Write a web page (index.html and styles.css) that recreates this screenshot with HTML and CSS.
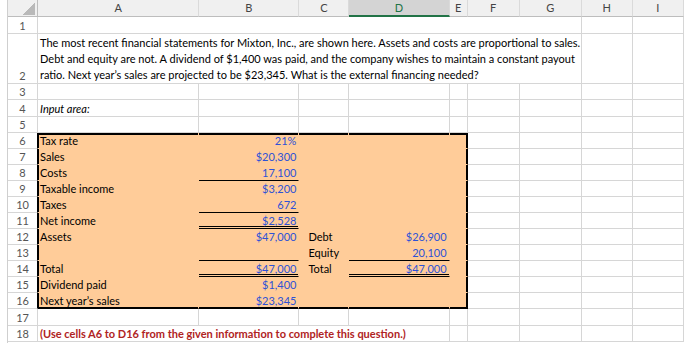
FILE: index.html
```html
<!DOCTYPE html>
<html lang="en">
<head>
  <meta charset="UTF-8">
  <title>External financing needed</title>
  <link rel="stylesheet" href="styles.css">
</head>
<body>
  <div class="sheet">
    <table class="grid">
      <colgroup>
        <col class="c-rh">
        <col class="c-a">
        <col class="c-b">
        <col class="c-c">
        <col class="c-d">
        <col class="c-e">
        <col class="c-f">
        <col class="c-g">
        <col class="c-h">
        <col class="c-i">
      </colgroup>
      <thead>
        <tr class="hdr">
          <th class="corner"></th>
          <th>A</th>
          <th>B</th>
          <th>C</th>
          <th class="sel">D</th>
          <th>E</th>
          <th>F</th>
          <th>G</th>
          <th>H</th>
          <th>I</th>
        </tr>
      </thead>
      <tbody>
        <tr class="r17">
          <th>1</th>
          <td colspan="7"></td><td></td><td></td>
        </tr>
        <tr class="tall">
          <th>2</th>
          <td colspan="7" class="intro">The most recent financial statements for Mixton, Inc., are shown here. Assets and costs are proportional to sales.<br>Debt and equity are not. A dividend of $1,400 was paid, and the company wishes to maintain a constant payout<br>ratio. Next year’s sales are projected to be $23,345. What is the external financing needed?</td>
          <td></td><td></td>
        </tr>
        <tr>
          <th>3</th>
          <td></td><td></td><td></td><td></td><td></td><td></td><td></td><td></td><td></td>
        </tr>
        <tr class="r17">
          <th>4</th>
          <td class="note">Input area:</td><td></td><td></td><td></td><td></td><td></td><td></td><td></td><td></td>
        </tr>
        <tr>
          <th>5</th>
          <td></td><td></td><td></td><td></td><td></td><td></td><td></td><td></td><td></td>
        </tr>
        <tr>
          <th class="edge">6</th>
          <td class="in tl">Tax rate</td>
          <td class="in t num">21%</td>
          <td class="in t"></td>
          <td class="in t"></td>
          <td class="in tr"></td>
          <td></td><td></td><td></td><td></td>
        </tr>
        <tr>
          <th class="edge">7</th>
          <td class="in l">Sales</td>
          <td class="in num">$20,300</td>
          <td class="in"></td>
          <td class="in"></td>
          <td class="in r"></td>
          <td></td><td></td><td></td><td></td>
        </tr>
        <tr>
          <th class="edge">8</th>
          <td class="in l">Costs</td>
          <td class="in num single">17,100</td>
          <td class="in"></td>
          <td class="in"></td>
          <td class="in r"></td>
          <td></td><td></td><td></td><td></td>
        </tr>
        <tr>
          <th class="edge">9</th>
          <td class="in l">Taxable income</td>
          <td class="in num">$3,200</td>
          <td class="in"></td>
          <td class="in"></td>
          <td class="in r"></td>
          <td></td><td></td><td></td><td></td>
        </tr>
        <tr>
          <th class="edge">10</th>
          <td class="in l">Taxes</td>
          <td class="in num single">672</td>
          <td class="in"></td>
          <td class="in"></td>
          <td class="in r"></td>
          <td></td><td></td><td></td><td></td>
        </tr>
        <tr>
          <th class="edge">11</th>
          <td class="in l">Net income</td>
          <td class="in num double">$2,528</td>
          <td class="in"></td>
          <td class="in"></td>
          <td class="in r"></td>
          <td></td><td></td><td></td><td></td>
        </tr>
        <tr>
          <th class="edge">12</th>
          <td class="in l">Assets</td>
          <td class="in num">$47,000</td>
          <td class="in indent">Debt</td>
          <td class="in num">$26,900</td>
          <td class="in r"></td>
          <td></td><td></td><td></td><td></td>
        </tr>
        <tr>
          <th class="edge">13</th>
          <td class="in l"></td>
          <td class="in num single"></td>
          <td class="in indent">Equity</td>
          <td class="in num single">20,100</td>
          <td class="in r"></td>
          <td></td><td></td><td></td><td></td>
        </tr>
        <tr>
          <th class="edge">14</th>
          <td class="in l">Total</td>
          <td class="in num double">$47,000</td>
          <td class="in indent">Total</td>
          <td class="in num double">$47,000</td>
          <td class="in r"></td>
          <td></td><td></td><td></td><td></td>
        </tr>
        <tr>
          <th class="edge">15</th>
          <td class="in l">Dividend paid</td>
          <td class="in num">$1,400</td>
          <td class="in"></td>
          <td class="in"></td>
          <td class="in r"></td>
          <td></td><td></td><td></td><td></td>
        </tr>
        <tr>
          <th class="edge">16</th>
          <td class="in bl">Next year’s sales</td>
          <td class="in b num">$23,345</td>
          <td class="in b"></td>
          <td class="in b"></td>
          <td class="in br"></td>
          <td></td><td></td><td></td><td></td>
        </tr>
        <tr class="r17">
          <th>17</th>
          <td></td><td></td><td></td><td></td><td></td><td></td><td></td><td></td><td></td>
        </tr>
        <tr>
          <th>18</th>
          <td colspan="4" class="hint">(Use cells A6 to D16 from the given information to complete this question.)</td>
          <td></td><td></td><td></td><td></td><td></td>
        </tr>
      </tbody>
    </table>
  </div>
</body>
</html>
```

FILE: styles.css
```css
body {
  margin: 0;
  background-color: #fff;
  font-family: Lato, "Liberation Sans", sans-serif;
  font-size: 11px;
  color: #000;
}

.sheet {
  margin-left: 7px;
  border-left: 1px solid #cfcfcf;
  height: 343px;
  overflow: hidden;
}

.grid {
  table-layout: fixed;
  border-collapse: separate;
  border-spacing: 0;
  width: 676px;
}

.c-rh { width: 30px; }
.c-a { width: 161px; }
.c-b { width: 100px; }
.c-c { width: 50px; }
.c-d { width: 100px; }
.c-e { width: 18px; }
.c-f { width: 52px; }
.c-g { width: 62px; }
.c-h { width: 51px; }
.c-i { width: 51px; }

.grid th,
.grid td {
  height: 16px;
  padding: 1px 2px 0;
  line-height: 14px;
  white-space: nowrap;
  vertical-align: bottom;
  border-right: 1px solid #d6d6d6;
  border-bottom: 1px solid #d6d6d6;
  box-sizing: border-box;
}

/* column letters */
.hdr th {
  height: 17px;
  padding-top: 0;
  line-height: 16px;
  font-weight: normal;
  color: #444;
  background-color: #f0f0f0;
  border-right-color: #dadada;
  border-bottom-color: #bdbdbd;
  text-align: center;
}

.hdr th.sel {
  line-height: 15px;
  color: #217346;
  background-color: #d4d4d4;
  border-bottom: 2px solid #217346;
}

.hdr th.corner {
  background-color: #f0f0f0;
  background-image: linear-gradient(to bottom right, transparent 50%, #b9b9b9 50%);
  background-size: 12px 12px;
  background-position: right 2px bottom 1px;
  background-repeat: no-repeat;
  border-right-color: #bdbdbd;
}

/* row numbers */
tbody th {
  font-weight: normal;
  color: #555;
  text-align: center;
  background-color: #fff;
  border-right-color: #bdbdbd;
  padding-left: 1px;
  padding-right: 0;
}

tbody th.edge {
  border-right-color: #000;
}

.tall th,
.tall td {
  height: 50px;
}

.r17 th,
.r17 td {
  height: 17px;
  line-height: 15px;
}

/* the wrapped question keeps Excel's line breaks */
.grid td.intro {
  padding-top: 0;
  line-height: 16px;
}

.note {
  font-style: italic;
}

.hint {
  color: #b02323;
  font-weight: bold;
}

/* input area */
.in {
  background-color: #ffcc99;
}

.grid td.in {
  border-right-color: transparent;
  border-bottom-color: transparent;
}

.num {
  text-align: right;
  color: #2e52d6;
}

.grid td.indent {
  padding-left: 9px;
}

/* accounting underlines, drawn without changing the row height */
.grid td.single,
.grid td.double {
  border-bottom-color: #000;
}

.grid td.double {
  box-shadow: inset 0 -1px #ffcc99, inset 0 -2px #000;
}

.l { box-shadow: inset 1px 0 #000; }
.t { box-shadow: inset 0 2px #000; }
.tl { box-shadow: inset 1px 2px #000; }
.tr { box-shadow: inset -1px 2px #000; }
.r { box-shadow: inset -1px 0 #000; }
.b { box-shadow: inset 0 -1px #000; }
.bl { box-shadow: inset 1px -1px #000; }
.br { box-shadow: inset -1px -1px #000; }

.grid td.tr,
.grid td.r,
.grid td.br {
  border-right-color: #000;
}

.grid td.b,
.grid td.bl,
.grid td.br {
  border-bottom-color: #000;
}
```
